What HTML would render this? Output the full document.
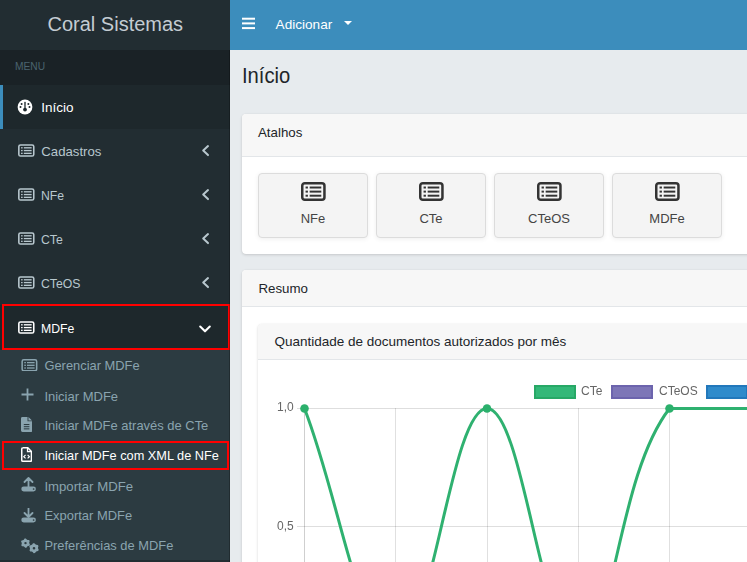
<!DOCTYPE html>
<html><head><meta charset="utf-8">
<style>
*{margin:0;padding:0;box-sizing:border-box}
html,body{width:747px;height:562px;overflow:hidden;background:#e7ebee;font-family:"Liberation Sans",sans-serif}
.abs{position:absolute}
.t{position:absolute;white-space:nowrap;line-height:1}
.card{position:absolute;background:#fff;border-radius:4px;box-shadow:0 0 1px rgba(0,0,0,.1),0 1px 3px rgba(0,0,0,.14);overflow:hidden}
.btn{position:absolute;top:173px;width:110px;height:65px;background:#f4f4f4;border:1px solid #dcdcdc;border-radius:4px;box-shadow:0 1px 5px rgba(0,0,0,.07)}
</style></head><body>
<div class="abs" style="left:0;top:0;width:230px;height:562px;background:#222d32">
<div class="t" style="left:47.5px;top:13.77px;font-size:20px;color:#c4ccd2;">Coral Sistemas</div>
<div class="abs" style="left:0;top:50px;width:230px;height:35px;background:#1a2226"></div>
<div class="t" style="left:15.4px;top:60.69px;font-size:11px;color:#4b646f;transform:scaleX(0.93);transform-origin:0 0">MENU</div>
<div class="abs" style="left:0;top:85px;width:230px;height:44px;background:#1e282c"></div>
<div class="abs" style="left:0;top:85px;width:3px;height:44px;background:#3c8dbc"></div>
<svg class="abs" style="left:17.2px;top:98.5px" width="16" height="16" viewBox="0 0 16 16"><circle cx="8" cy="8" r="7.4" fill="#fff"/><circle cx="4.6" cy="4.9" r="1" fill="#1e282c"/><circle cx="11.4" cy="4.9" r="1" fill="#1e282c"/><circle cx="3.5" cy="8" r="1" fill="#1e282c"/><circle cx="12.5" cy="8" r="1" fill="#1e282c"/><path d="M7.3 3 Q8 2.3 8.7 3 L8.6 10 L7.4 10 Z" fill="#1e282c"/><circle cx="8" cy="10.6" r="1.9" fill="#1e282c"/></svg>
<div class="t" style="left:41.3px;top:100.57px;font-size:13.5px;color:#fff;">Início</div>
<svg class="abs" style="left:17.8px;top:144px" width="16.8" height="13" viewBox="0 0 17 13"><rect x="0.85" y="0.85" width="15.1" height="11.3" rx="1.7" fill="none" stroke="#b8c7ce" stroke-width="1.6"/><rect x="3.1" y="3.1" width="1.6" height="1.35" fill="#b8c7ce"/><rect x="3.1" y="5.9" width="1.6" height="1.35" fill="#b8c7ce"/><rect x="3.1" y="8.7" width="1.6" height="1.35" fill="#b8c7ce"/><rect x="5.9" y="3.1" width="7.9" height="1.35" fill="#b8c7ce"/><rect x="5.9" y="5.9" width="7.9" height="1.35" fill="#b8c7ce"/><rect x="5.9" y="8.7" width="7.9" height="1.35" fill="#b8c7ce"/></svg>
<div class="t" style="left:41.3px;top:145.03px;font-size:13.2px;color:#b8c7ce;">Cadastros</div>
<svg class="abs" style="left:199.5px;top:144px" width="10" height="13" viewBox="0 0 10 13"><path d="M8 2.1 L3.2 6.6 L8 11.1" fill="none" stroke="#b8c7ce" stroke-width="2" stroke-linecap="round" stroke-linejoin="round"/></svg>
<svg class="abs" style="left:17.8px;top:188px" width="16.8" height="13" viewBox="0 0 17 13"><rect x="0.85" y="0.85" width="15.1" height="11.3" rx="1.7" fill="none" stroke="#b8c7ce" stroke-width="1.6"/><rect x="3.1" y="3.1" width="1.6" height="1.35" fill="#b8c7ce"/><rect x="3.1" y="5.9" width="1.6" height="1.35" fill="#b8c7ce"/><rect x="3.1" y="8.7" width="1.6" height="1.35" fill="#b8c7ce"/><rect x="5.9" y="3.1" width="7.9" height="1.35" fill="#b8c7ce"/><rect x="5.9" y="5.9" width="7.9" height="1.35" fill="#b8c7ce"/><rect x="5.9" y="8.7" width="7.9" height="1.35" fill="#b8c7ce"/></svg>
<div class="t" style="left:41.3px;top:189.03px;font-size:13.2px;color:#b8c7ce;transform:scaleX(0.93);transform-origin:0 0">NFe</div>
<svg class="abs" style="left:199.5px;top:188px" width="10" height="13" viewBox="0 0 10 13"><path d="M8 2.1 L3.2 6.6 L8 11.1" fill="none" stroke="#b8c7ce" stroke-width="2" stroke-linecap="round" stroke-linejoin="round"/></svg>
<svg class="abs" style="left:17.8px;top:232px" width="16.8" height="13" viewBox="0 0 17 13"><rect x="0.85" y="0.85" width="15.1" height="11.3" rx="1.7" fill="none" stroke="#b8c7ce" stroke-width="1.6"/><rect x="3.1" y="3.1" width="1.6" height="1.35" fill="#b8c7ce"/><rect x="3.1" y="5.9" width="1.6" height="1.35" fill="#b8c7ce"/><rect x="3.1" y="8.7" width="1.6" height="1.35" fill="#b8c7ce"/><rect x="5.9" y="3.1" width="7.9" height="1.35" fill="#b8c7ce"/><rect x="5.9" y="5.9" width="7.9" height="1.35" fill="#b8c7ce"/><rect x="5.9" y="8.7" width="7.9" height="1.35" fill="#b8c7ce"/></svg>
<div class="t" style="left:41.3px;top:233.03px;font-size:13.2px;color:#b8c7ce;transform:scaleX(0.93);transform-origin:0 0">CTe</div>
<svg class="abs" style="left:199.5px;top:232px" width="10" height="13" viewBox="0 0 10 13"><path d="M8 2.1 L3.2 6.6 L8 11.1" fill="none" stroke="#b8c7ce" stroke-width="2" stroke-linecap="round" stroke-linejoin="round"/></svg>
<svg class="abs" style="left:17.8px;top:276px" width="16.8" height="13" viewBox="0 0 17 13"><rect x="0.85" y="0.85" width="15.1" height="11.3" rx="1.7" fill="none" stroke="#b8c7ce" stroke-width="1.6"/><rect x="3.1" y="3.1" width="1.6" height="1.35" fill="#b8c7ce"/><rect x="3.1" y="5.9" width="1.6" height="1.35" fill="#b8c7ce"/><rect x="3.1" y="8.7" width="1.6" height="1.35" fill="#b8c7ce"/><rect x="5.9" y="3.1" width="7.9" height="1.35" fill="#b8c7ce"/><rect x="5.9" y="5.9" width="7.9" height="1.35" fill="#b8c7ce"/><rect x="5.9" y="8.7" width="7.9" height="1.35" fill="#b8c7ce"/></svg>
<div class="t" style="left:41.3px;top:277.03px;font-size:13.2px;color:#b8c7ce;transform:scaleX(0.93);transform-origin:0 0">CTeOS</div>
<svg class="abs" style="left:199.5px;top:276px" width="10" height="13" viewBox="0 0 10 13"><path d="M8 2.1 L3.2 6.6 L8 11.1" fill="none" stroke="#b8c7ce" stroke-width="2" stroke-linecap="round" stroke-linejoin="round"/></svg>
<div class="abs" style="left:0;top:305px;width:230px;height:44px;background:#1e282c"></div>
<svg class="abs" style="left:17.8px;top:320.6px" width="16.8" height="13" viewBox="0 0 17 13"><rect x="0.85" y="0.85" width="15.1" height="11.3" rx="1.7" fill="none" stroke="#fff" stroke-width="1.6"/><rect x="3.1" y="3.1" width="1.6" height="1.35" fill="#fff"/><rect x="3.1" y="5.9" width="1.6" height="1.35" fill="#fff"/><rect x="3.1" y="8.7" width="1.6" height="1.35" fill="#fff"/><rect x="5.9" y="3.1" width="7.9" height="1.35" fill="#fff"/><rect x="5.9" y="5.9" width="7.9" height="1.35" fill="#fff"/><rect x="5.9" y="8.7" width="7.9" height="1.35" fill="#fff"/></svg>
<div class="t" style="left:41.3px;top:321.53px;font-size:13.2px;color:#fff;transform:scaleX(0.93);transform-origin:0 0">MDFe</div>
<svg class="abs" style="left:197.5px;top:324.5px" width="14" height="9" viewBox="0 0 14 9"><path d="M2.2 1.6 L7 6.3 L11.8 1.6" fill="none" stroke="#fff" stroke-width="2.1" stroke-linecap="round" stroke-linejoin="round"/></svg>
<div class="abs" style="left:0;top:350px;width:230px;height:210px;background:#2c3b41"></div>
<div class="t" style="left:44.4px;top:360.08px;font-size:12.9px;color:#8aa4af;">Gerenciar MDFe</div>
<svg class="abs" style="left:20.6px;top:358.5px" width="17" height="12.5" viewBox="0 0 17 13"><rect x="0.85" y="0.85" width="15.1" height="11.3" rx="1.7" fill="none" stroke="#8aa4af" stroke-width="1.6"/><rect x="3.1" y="3.1" width="1.6" height="1.35" fill="#8aa4af"/><rect x="3.1" y="5.9" width="1.6" height="1.35" fill="#8aa4af"/><rect x="3.1" y="8.7" width="1.6" height="1.35" fill="#8aa4af"/><rect x="5.9" y="3.1" width="7.9" height="1.35" fill="#8aa4af"/><rect x="5.9" y="5.9" width="7.9" height="1.35" fill="#8aa4af"/><rect x="5.9" y="8.7" width="7.9" height="1.35" fill="#8aa4af"/></svg>
<div class="t" style="left:44.4px;top:390.00px;font-size:13.0px;color:#8aa4af;">Iniciar MDFe</div>
<svg class="abs" style="left:21px;top:387.5px" width="13" height="13" viewBox="0 0 13 13"><path d="M6.5 0.5 V12.5 M0.5 6.5 H12.5" stroke="#8aa4af" stroke-width="1.8"/></svg>
<div class="t" style="left:44.4px;top:420.04px;font-size:12.95px;color:#8aa4af;">Iniciar MDFe através de CTe</div>
<svg class="abs" style="left:20.9px;top:416.9px" width="11.2" height="15" viewBox="0 0 12 16" preserveAspectRatio="none"><path d="M1.5 0 H7 V4.5 H12 V14.5 Q12 16 10.5 16 H1.5 Q0 16 0 14.5 V1.5 Q0 0 1.5 0 Z M8 0 L12 3.8 H8 Z" fill="#8aa4af"/><rect x="3" y="7.5" width="6" height="1.1" fill="#2c3b41"/><rect x="3" y="9.8" width="6" height="1.1" fill="#2c3b41"/><rect x="3" y="12.1" width="6" height="1.1" fill="#2c3b41"/></svg>
<div class="t" style="left:44.4px;top:450.21px;font-size:12.75px;color:#fff;">Iniciar MDFe com XML de NFe</div>
<svg class="abs" style="left:20.9px;top:447.4px" width="11.2" height="15" viewBox="0 0 12 16" preserveAspectRatio="none"><path d="M1.8 0.8 H7.3 L11.2 4.7 V14 Q11.2 15.2 10 15.2 H2 Q0.8 15.2 0.8 14 V2 Q0.8 0.8 2 0.8 Z" fill="none" stroke="#fff" stroke-width="1.6"/><path d="M7 1 V5 H11" fill="none" stroke="#fff" stroke-width="1.4"/><path d="M4.9 8.4 L3.0 10.3 L4.9 12.2 M7.1 8.4 L9.0 10.3 L7.1 12.2" fill="none" stroke="#fff" stroke-width="1.3"/></svg>
<div class="t" style="left:44.4px;top:479.83px;font-size:13.2px;color:#8aa4af;">Importar MDFe</div>
<svg class="abs" style="left:20.5px;top:477px" width="16" height="15" viewBox="0 0 16 15"><path d="M7.5 1 L3.5 5 M7.5 1 L11.5 5 M7.5 1 V10" fill="none" stroke="#8aa4af" stroke-width="1.8" stroke-linecap="round"/><rect x="0.3" y="9.5" width="14.6" height="5" rx="2.4" fill="#8aa4af"/><circle cx="12.6" cy="12" r="0.85" fill="#2c3b41"/></svg>
<div class="t" style="left:44.4px;top:510.04px;font-size:12.95px;color:#8aa4af;">Exportar MDFe</div>
<svg class="abs" style="left:20.5px;top:508px" width="16" height="15" viewBox="0 0 16 15"><path d="M7.5 9 L3.5 5 M7.5 9 L11.5 5 M7.5 9 V0" fill="none" stroke="#8aa4af" stroke-width="1.8" stroke-linecap="round"/><rect x="0.3" y="9.5" width="14.6" height="5" rx="2.4" fill="#8aa4af"/><circle cx="12.6" cy="12" r="0.85" fill="#2c3b41"/></svg>
<div class="t" style="left:44.4px;top:540.08px;font-size:12.9px;color:#8aa4af;">Preferências de MDFe</div>
<svg class="abs" style="left:0;top:530px" width="50" height="30" viewBox="0 530 50 30"><path fill-rule="evenodd" d="M24.58 538.49 L25.81 538.41 L26.72 539.50 L27.61 539.94 L29.03 540.00 L29.72 541.02 L29.23 542.36 L29.29 543.35 L29.95 544.61 L29.41 545.71 L28.01 545.96 L27.18 546.51 L26.42 547.71 L25.19 547.79 L24.28 546.70 L23.39 546.26 L21.97 546.20 L21.28 545.18 L21.77 543.84 L21.71 542.85 L21.05 541.59 L21.59 540.49 L22.99 540.24 L23.82 539.69 Z M26.7 543.1 A1.2 1.2 0 1 0 24.3 543.1 A1.2 1.2 0 1 0 26.7 543.1 Z" fill="#8aa4af"/><path fill-rule="evenodd" d="M33.02 543.30 L34.33 543.21 L35.32 544.32 L36.28 544.79 L37.76 544.90 L38.48 545.99 L38.02 547.40 L38.09 548.47 L38.73 549.81 L38.16 550.98 L36.70 551.28 L35.81 551.88 L34.98 553.10 L33.67 553.19 L32.68 552.08 L31.72 551.61 L30.24 551.50 L29.52 550.41 L29.98 549.00 L29.91 547.93 L29.27 546.59 L29.84 545.42 L31.30 545.12 L32.19 544.52 Z M35.3 548.2 A1.3 1.3 0 1 0 32.7 548.2 A1.3 1.3 0 1 0 35.3 548.2 Z" fill="#8aa4af"/></svg>
<div class="abs" style="left:2px;top:304px;width:228px;height:46px;border:2px solid #f00"></div>
<div class="abs" style="left:2px;top:441px;width:227px;height:29px;border:2px solid #f00"></div>
<div class="abs" style="left:229px;top:50px;width:1px;height:512px;background:rgba(0,0,0,.25)"></div>
</div>
<div class="abs" style="left:230px;top:0;width:517px;height:50px;background:#3c8dbc"></div>
<svg class="abs" style="left:242px;top:17px" width="13" height="13" viewBox="0 0 13 13"><rect x="0" y="0.7" width="13" height="2" fill="#fff"/><rect x="0" y="5.4" width="13" height="2" fill="#fff"/><rect x="0" y="10.1" width="13" height="2" fill="#fff"/></svg>
<div class="t" style="left:275.6px;top:17.59px;font-size:13.6px;color:#fff;">Adicionar</div>
<svg class="abs" style="left:344px;top:21px" width="8" height="4" viewBox="0 0 8 4"><path d="M0 0 H8 L4 4 Z" fill="#fff"/></svg>
<div class="t" style="left:242.3px;top:66.20px;font-size:21.5px;color:#212529;transform:scaleX(0.94);transform-origin:0 0">Início</div>
<div class="card" style="left:242px;top:114px;width:530px;height:140px"><div class="abs" style="left:0;top:0;width:530px;height:43px;background:#f7f7f7;border-bottom:1px solid #e3e6e9"></div></div>
<div class="t" style="left:258.0px;top:125.74px;font-size:13.3px;color:#212529;">Atalhos</div>
<div class="btn" style="left:258px"></div>
<svg class="abs" style="left:300.5px;top:182.3px" width="25" height="19" viewBox="0 0 17 13" preserveAspectRatio="none"><rect x="0.85" y="0.85" width="15.1" height="11.3" rx="1.7" fill="none" stroke="#333" stroke-width="1.7"/><rect x="3.1" y="3.1" width="1.6" height="1.35" fill="#333"/><rect x="3.1" y="5.9" width="1.6" height="1.35" fill="#333"/><rect x="3.1" y="8.7" width="1.6" height="1.35" fill="#333"/><rect x="5.9" y="3.1" width="7.9" height="1.35" fill="#333"/><rect x="5.9" y="5.9" width="7.9" height="1.35" fill="#333"/><rect x="5.9" y="8.7" width="7.9" height="1.35" fill="#333"/></svg>
<div class="t" style="left:258px;width:110px;text-align:center;top:211.90px;font-size:13px;color:#444">NFe</div>
<div class="btn" style="left:376px"></div>
<svg class="abs" style="left:418.5px;top:182.3px" width="25" height="19" viewBox="0 0 17 13" preserveAspectRatio="none"><rect x="0.85" y="0.85" width="15.1" height="11.3" rx="1.7" fill="none" stroke="#333" stroke-width="1.7"/><rect x="3.1" y="3.1" width="1.6" height="1.35" fill="#333"/><rect x="3.1" y="5.9" width="1.6" height="1.35" fill="#333"/><rect x="3.1" y="8.7" width="1.6" height="1.35" fill="#333"/><rect x="5.9" y="3.1" width="7.9" height="1.35" fill="#333"/><rect x="5.9" y="5.9" width="7.9" height="1.35" fill="#333"/><rect x="5.9" y="8.7" width="7.9" height="1.35" fill="#333"/></svg>
<div class="t" style="left:376px;width:110px;text-align:center;top:211.90px;font-size:13px;color:#444">CTe</div>
<div class="btn" style="left:494px"></div>
<svg class="abs" style="left:536.5px;top:182.3px" width="25" height="19" viewBox="0 0 17 13" preserveAspectRatio="none"><rect x="0.85" y="0.85" width="15.1" height="11.3" rx="1.7" fill="none" stroke="#333" stroke-width="1.7"/><rect x="3.1" y="3.1" width="1.6" height="1.35" fill="#333"/><rect x="3.1" y="5.9" width="1.6" height="1.35" fill="#333"/><rect x="3.1" y="8.7" width="1.6" height="1.35" fill="#333"/><rect x="5.9" y="3.1" width="7.9" height="1.35" fill="#333"/><rect x="5.9" y="5.9" width="7.9" height="1.35" fill="#333"/><rect x="5.9" y="8.7" width="7.9" height="1.35" fill="#333"/></svg>
<div class="t" style="left:494px;width:110px;text-align:center;top:211.90px;font-size:13px;color:#444">CTeOS</div>
<div class="btn" style="left:612px"></div>
<svg class="abs" style="left:654.5px;top:182.3px" width="25" height="19" viewBox="0 0 17 13" preserveAspectRatio="none"><rect x="0.85" y="0.85" width="15.1" height="11.3" rx="1.7" fill="none" stroke="#333" stroke-width="1.7"/><rect x="3.1" y="3.1" width="1.6" height="1.35" fill="#333"/><rect x="3.1" y="5.9" width="1.6" height="1.35" fill="#333"/><rect x="3.1" y="8.7" width="1.6" height="1.35" fill="#333"/><rect x="5.9" y="3.1" width="7.9" height="1.35" fill="#333"/><rect x="5.9" y="5.9" width="7.9" height="1.35" fill="#333"/><rect x="5.9" y="8.7" width="7.9" height="1.35" fill="#333"/></svg>
<div class="t" style="left:612px;width:110px;text-align:center;top:211.90px;font-size:13px;color:#444">MDFe</div>
<div class="card" style="left:242px;top:270px;width:530px;height:320px"><div class="abs" style="left:0;top:0;width:530px;height:37px;background:#f7f7f7;border-bottom:1px solid #e3e6e9"></div></div>
<div class="t" style="left:258.4px;top:281.84px;font-size:13.3px;color:#212529;">Resumo</div>
<div class="card" style="left:258px;top:324px;width:520px;height:300px"><div class="abs" style="left:0;top:0;width:520px;height:36px;background:#f7f7f7;border-bottom:1px solid #e3e6e9"></div></div>
<div class="t" style="left:274.4px;top:334.67px;font-size:13.5px;color:#212529;">Quantidade de documentos autorizados por mês</div>
<svg class="abs" style="left:0;top:0" width="747" height="562" viewBox="0 0 747 562"><g><rect x="297" y="408.0" width="460" height="1" fill="rgba(0,0,0,.13)"/><rect x="297" y="526.0" width="460" height="1" fill="rgba(0,0,0,.13)"/><rect x="304" y="408.0" width="1" height="200" fill="rgba(0,0,0,.19)"/><rect x="395" y="408.0" width="1" height="200" fill="rgba(0,0,0,.12)"/><rect x="487" y="408.0" width="1" height="200" fill="rgba(0,0,0,.12)"/><rect x="578" y="408.0" width="1" height="200" fill="rgba(0,0,0,.12)"/><rect x="669" y="408.0" width="1" height="200" fill="rgba(0,0,0,.12)"/><rect x="760" y="408.0" width="1" height="200" fill="rgba(0,0,0,.12)"/><path d="M304.5 408.5 C341.00 502.90 359.25 644.50 395.75 644.50 C432.25 644.50 450.50 408.50 487.00 408.50 C523.50 408.50 541.75 644.50 578.25 644.50 C614.75 644.50 615.85 477.88 669.50 408.50 C688.85 408.50 724.25 408.50 760.75 408.50" fill="none" stroke="#2fb170" stroke-width="3"/><circle cx="304.5" cy="408.5" r="4.3" fill="#2bb06c"/><circle cx="487.0" cy="408.5" r="4.3" fill="#2bb06c"/><circle cx="669.5" cy="408.5" r="4.3" fill="#2bb06c"/><rect x="535" y="386" width="40" height="12" fill="#33b878" stroke="#27a866" stroke-width="2"/><rect x="612" y="386" width="40" height="12" fill="#7d76b7" stroke="#6c64ad" stroke-width="2"/><rect x="707" y="386" width="40" height="12" fill="#2f8bcb" stroke="#2278bb" stroke-width="2"/></g></svg>
<div class="t" style="left:581.0px;top:385.14px;font-size:12px;color:#666;will-change:transform">CTe</div>
<div class="t" style="left:658.7px;top:385.14px;font-size:12px;color:#666;will-change:transform">CTeOS</div>
<div class="t" style="left:277.0px;top:401.44px;font-size:12px;color:#666;will-change:transform">1,0</div>
<div class="t" style="left:277.0px;top:520.14px;font-size:12px;color:#666;will-change:transform">0,5</div>
</body></html>
